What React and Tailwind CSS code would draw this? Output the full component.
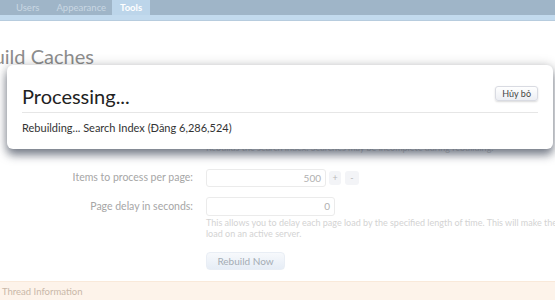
export default function App() {
  return (
    <div className="relative w-[555px] h-[300px] overflow-hidden bg-white font-['Lato',sans-serif]">
      <div className="flex h-[15px] bg-[#9fb5c8] pl-[16px] text-[9.5px] text-[#c9d7e3]">
        <span className="leading-[15px]">Users</span>
        <span className="ml-[17px] leading-[15px]">Appearance</span>
        <span className="ml-[6px] bg-[#bcd5ea] px-[8px] leading-[15px] font-bold text-white">Tools</span>
      </div>
      <div className="h-[6px] bg-[#c2daee] border-b border-[#b7ccde]"></div>

      <div className="mt-[23px] h-[24px] leading-[24px] text-[20px] text-[#8d8d8d] whitespace-nowrap ml-[-40px]">Rebuild Caches</div>

      <div className="h-[74px]"></div>
      <div className="ml-[206px] text-[9px] leading-[12px] text-[#cfcfcf] whitespace-nowrap">Rebuilds the search index. Searches may be incomplete during rebuilding.</div>

      <div className="mt-[15px] flex items-center">
        <div className="w-[193px] text-right text-[10.5px] text-[#a6a6a6]">Items to process per page:</div>
        <div className="ml-[13px] w-[120px] h-[18px] border border-[#ebebeb] rounded-[3px] text-right pr-[4px] text-[10px] leading-[16px] text-[#b0b0b0]">500</div>
        <div className="ml-[3px] w-[12px] h-[14px] rounded-[3px] bg-[#f3f4f7] text-center text-[9px] leading-[14px] text-[#b8b8b8]">+</div>
        <div className="ml-[4px] w-[14px] h-[14px] rounded-[3px] bg-[#f3f4f7] text-center text-[9px] leading-[14px] text-[#b8b8b8]">-</div>
      </div>

      <div className="mt-[10px] flex items-center">
        <div className="w-[193px] text-right text-[10.5px] text-[#a6a6a6]">Page delay in seconds:</div>
        <div className="ml-[13px] w-[129px] h-[19px] border border-[#ebebeb] rounded-[3px] text-right pr-[4px] text-[10px] leading-[17px] text-[#b0b0b0]">0</div>
      </div>
      <div className="ml-[206px] mt-[1px] text-[9px] leading-[11px] text-[#d3d3d3] whitespace-nowrap">
        <div>This allows you to delay each page load by the specified length of time. This will make the</div>
        <div>load on an active server.</div>
      </div>

      <div className="ml-[206px] mt-[13px] w-[79px] h-[18px] rounded-[4px] bg-gradient-to-b from-[#f7f9fc] to-[#e6edf6] border border-[#e9eef5] text-center text-[10px] leading-[16px] text-[#a4acb4]">Rebuild Now</div>

      <div className="mt-[11px] h-[30px] bg-[#fdf3ea] border-t border-[#f9e9da] pl-[2px] pt-[3px] text-[9.5px] text-[#c9b8a8]">Thread Information</div>

      <div className="absolute left-[7px] top-[65px] w-[546px] h-[84px] rounded-[6px] bg-white shadow-[0_6px_10px_rgba(45,55,75,0.6),0_0_12px_rgba(0,0,0,0.18)] px-[15px]">
        <div className="flex items-start justify-between pt-[19px]">
          <div className="h-[24px] leading-[24px] text-[20px] text-[#222]">Processing...</div>
          <div className="mt-[2px] h-[15px] px-[6px] rounded-[3px] border border-[#d9dbe2] bg-gradient-to-b from-white to-[#eceef3] shadow-[0_1px_2px_rgba(0,0,0,0.15)] text-[9px] leading-[13px] text-[#444]">Hủy bỏ</div>
        </div>
        <div className="mt-[4px] border-t border-[#e6e6e6]"></div>
        <div className="mt-[8px] text-[11px] leading-[14px] text-[#333]">Rebuilding... Search Index (Đăng 6,286,524)</div>
      </div>
    </div>
  );
}
